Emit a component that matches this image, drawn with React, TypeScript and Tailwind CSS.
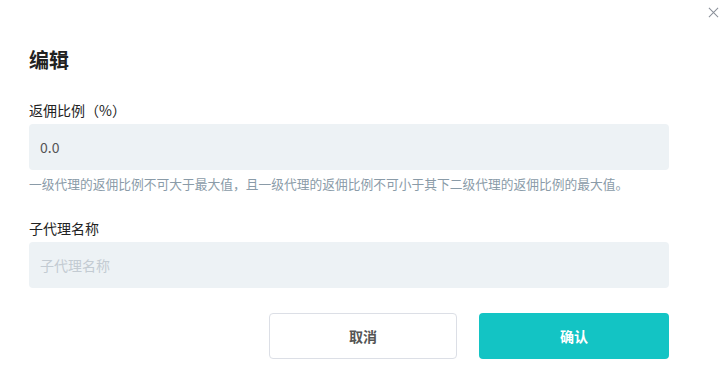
import React from 'react';

const font = { fontFamily: '"Noto Sans CJK SC", "Liberation Sans", sans-serif' };

export default function App() {
  return (
    <div className="relative h-[374px] w-[725px] bg-white" style={font}>
      <button className="absolute right-[5px] top-[6px] flex h-[13px] w-[13px] items-center justify-center text-[#8a8f99]" aria-label="close">
        <svg width="11" height="11" viewBox="0 0 12 12" fill="none" stroke="currentColor" strokeWidth="1.1">
          <path d="M1 1L11 11M11 1L1 11" />
        </svg>
      </button>

      <div className="flex w-[640px] flex-col pl-[29px] pt-[46px] box-content">
        <h2 className="text-[20px] font-bold leading-[28px] text-[#222]">编辑</h2>

        <label className="mt-[26px] text-[14px] leading-[20px] text-[#222]">返佣比例（%）</label>
        <div className="mt-[4px] flex h-[46px] items-center rounded-[4px] bg-[#edf2f5] px-[11px] text-[14px] text-[#555]">
          0.0
        </div>
        <p className="mt-[5px] text-[12.75px] leading-[18px] text-[#8a9ba8]">
          一级代理的返佣比例不可大于最大值，且一级代理的返佣比例不可小于其下二级代理的返佣比例的最大值。
        </p>

        <label className="mt-[25px] text-[14px] leading-[20px] text-[#222]">子代理名称</label>
        <input
          className="mt-[4px] h-[46px] rounded-[4px] bg-[#edf2f5] px-[11px] text-[14px] text-[#555] outline-none placeholder:text-[#c3cbd2]"
          placeholder="子代理名称"
          style={font}
        />

        <div className="mt-[25px] flex justify-end gap-[22px]">
          <button className="h-[46px] w-[188px] rounded-[4px] border border-[#dcdfe6] bg-white text-[14px] font-bold text-[#555]">
            取消
          </button>
          <button className="h-[46px] w-[190px] rounded-[4px] bg-[#13c4c4] text-[14px] font-bold text-white">
            确认
          </button>
        </div>
      </div>
    </div>
  );
}
